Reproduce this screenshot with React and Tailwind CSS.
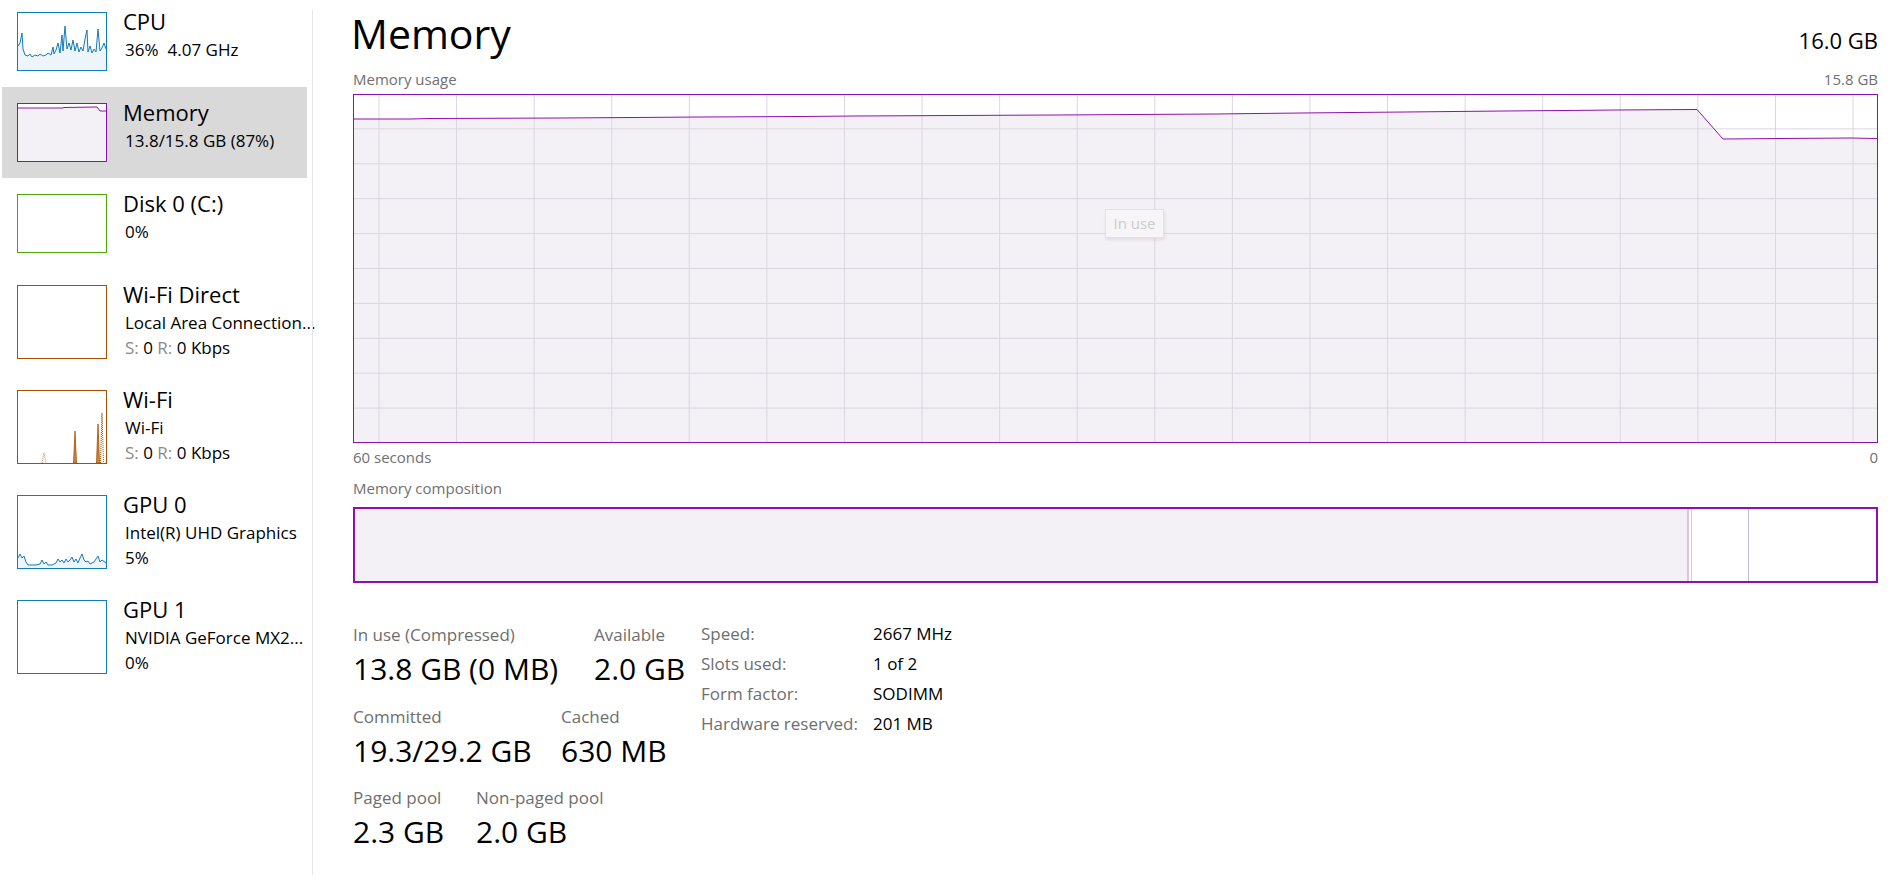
import React from "react";

const cpuPts =
  "0,33 2,30 4,20 5,36 7,42 10,43 12,41 14,44 17,42 20,43 22,41 25,43 28,42 30,40 33,42 35,34 36,41 38,37 40,30 42,40 44,22 45,38 47,13 49,36 51,30 53,37 55,27 57,38 59,30 61,39 63,34 65,38 67,26 69,17 70,39 72,33 74,40 76,36 78,39 80,16 82,38 84,35 86,30 88,36";
const gpuPts =
  "0,62 2,58 4,62 6,60 8,66 10,69 14,69 18,69 22,68 24,64 26,68 28,66 30,69 34,69 38,67 40,63 42,66 44,64 46,67 48,63 50,66 52,64 54,61 56,66 58,63 60,67 62,62 64,58 66,64 68,66 70,65 72,68 76,66 80,60 82,66 84,64 88,67";
const memThumbPts = "0,4 45,4 46,3.5 79,3 82,7 88,7";

function Thumb({ color, h, children }) {
  return (
    <div
      className={`w-[90px] shrink-0 border bg-white ${h === 74 ? "h-[74px]" : "h-[59px]"}`}
      style={{ borderColor: color }}
    >
      <svg className="block w-full h-full" viewBox={`0 0 88 ${h - 2}`} preserveAspectRatio="none">
        {children}
      </svg>
    </div>
  );
}

function AreaLine({ pts, h, stroke, fill }) {
  return (
    <>
      <polygon points={`${pts} 88,${h} 0,${h}`} fill={fill} />
      <polyline points={pts} fill="none" stroke={stroke} strokeWidth="1" />
    </>
  );
}

function SR() {
  return (
    <span>
      <span className="text-[#8a8a8a]">S:</span> 0 <span className="text-[#8a8a8a]">R:</span> 0 Kbps
    </span>
  );
}

const items = [
  {
    name: "CPU",
    lines: [
      <span key="a">
        36%<span className="ml-[9px]">4.07 GHz</span>
      </span>,
    ],
    h: 59,
    color: "#117dbb",
    graph: <AreaLine pts={cpuPts} h={57} stroke="#117dbb" fill="#eef5fa" />,
  },
  {
    name: "Memory",
    lines: ["13.8/15.8 GB (87%)"],
    h: 59,
    color: "#8b12ae",
    sel: true,
    graph: <AreaLine pts={memThumbPts} h={57} stroke="#8b12ae" fill="#f4f1f6" />,
  },
  { name: "Disk 0 (C:)", lines: ["0%"], h: 59, color: "#4da60c", graph: null },
  {
    name: "Wi-Fi Direct",
    lines: ["Local Area Connection...", <SR key="s" />],
    h: 74,
    color: "#a74f01",
    graph: null,
  },
  {
    name: "Wi-Fi",
    lines: ["Wi-Fi", <SR key="s" />],
    h: 74,
    color: "#a74f01",
    graph: (
      <>
        <polyline points="24,72 26,62 28,72" fill="none" stroke="#c98c5a" strokeWidth="1" strokeDasharray="1 1" />
        <polygon points="55.5,72 57,40 58.5,72" fill="#c4874f" stroke="#a74f01" strokeWidth="0.8" />
        <polygon points="78.5,72 80,33 81.5,72" fill="#c4874f" stroke="#a74f01" strokeWidth="0.8" />
        <polyline points="82.5,72 84,22 85.5,72" fill="none" stroke="#a74f01" strokeWidth="1" strokeDasharray="1 1" />
      </>
    ),
  },
  {
    name: "GPU 0",
    lines: ["Intel(R) UHD Graphics", "5%"],
    h: 74,
    color: "#117dbb",
    graph: <AreaLine pts={gpuPts} h={72} stroke="#117dbb" fill="#eef5fa" />,
  },
  { name: "GPU 1", lines: ["NVIDIA GeForce MX2...", "0%"], h: 74, color: "#117dbb", graph: null },
];

function Sidebar() {
  return (
    <div className="w-[312px] shrink-0 pl-[2px] pr-[5px] mt-[-4px] flex flex-col">
      {items.map((it) => (
        <div
          key={it.name}
          className={`flex pl-[15px] pt-[16px] ${it.h === 74 ? "h-[105px]" : "h-[91px]"} ${
            it.sel ? "bg-[#d9d9d9]" : ""
          }`}
        >
          <Thumb color={it.color} h={it.h}>
            {it.graph}
          </Thumb>
          <div className="ml-[16px] mt-[-5px] min-w-0">
            <div className="text-[22px] leading-[29px] whitespace-nowrap">{it.name}</div>
            <div className="mt-[1px]">
              {it.lines.map((l, i) => (
                <div key={i} className="text-[17px] leading-[25px] whitespace-nowrap pl-[2px]">
                  {l}
                </div>
              ))}
            </div>
          </div>
        </div>
      ))}
    </div>
  );
}

// chart inner 1523 x 347
const vLines = Array.from({ length: 20 }, (_, i) => 25 + i * 77.58);
const hLines = Array.from({ length: 9 }, (_, k) => -1 + (k + 1) * 34.9);
const memPts = [
  [0, 24],
  [56, 24],
  [76, 23.5],
  [206, 23],
  [280, 22.5],
  [346, 22],
  [446, 21.5],
  [500, 21],
  [600, 20.5],
  [700, 20],
  [780, 19.5],
  [860, 19],
  [946, 18],
  [1050, 17],
  [1150, 16],
  [1210, 15.5],
  [1260, 15],
  [1343, 14.5],
  [1369, 44],
  [1426, 43.5],
  [1496, 43],
  [1523, 43.5],
]
  .map((p) => p.join(","))
  .join(" ");

function UsageChart() {
  return (
    <div className="relative mt-[5px] h-[349px] border border-[#8b12ae] bg-white">
      <svg className="block w-full h-full" viewBox="0 0 1523 347" preserveAspectRatio="none">
        <polygon points={`${memPts} 1523,347 0,347`} fill="#f4f1f6" />
        {vLines.map((x, i) => (
          <line key={"v" + i} x1={x} y1="0" x2={x} y2="347" stroke="#dcd5e0" strokeWidth="1" />
        ))}
        {hLines.map((y, i) => (
          <line key={"h" + i} x1="0" y1={y} x2="1523" y2={y} stroke="#dcd5e0" strokeWidth="1" />
        ))}
        <polyline points={memPts} fill="none" stroke="#8b12ae" strokeWidth="1" />
      </svg>
      <div className="absolute left-[751px] top-[114px] w-[59px] h-[29px] border border-[#e2e2e2] bg-[#f7f5f8] shadow-[1px_2px_3px_rgba(0,0,0,0.08)] flex items-center justify-center text-[15px] text-[#cbcbcb]">
        In use
      </div>
    </div>
  );
}

function Stat({ label, value, w }) {
  return (
    <div className={w}>
      <div className="text-[17px] leading-[22px] text-[#6e6e6e] whitespace-nowrap">{label}</div>
      <div className="text-[30px] leading-[38px] mt-[4px] whitespace-nowrap">{value}</div>
    </div>
  );
}

function Main() {
  return (
    <div className="flex-1 min-w-0 pl-[40px] pr-[22px] pt-[12px] flex flex-col">
      <div className="flex justify-between items-baseline h-[42px]">
        <div className="text-[41px] leading-[42px] ml-[-2px]">Memory</div>
        <div className="text-[22px] leading-[42px]">16.0 GB</div>
      </div>
      <div className="mt-[15px] flex justify-between text-[15px] leading-[20px] text-[#707070]">
        <span>Memory usage</span>
        <span>15.8 GB</span>
      </div>
      <UsageChart />
      <div className="mt-[4px] flex justify-between text-[15px] leading-[20px] text-[#707070]">
        <span>60 seconds</span>
        <span>0</span>
      </div>
      <div className="mt-[11px] text-[15px] leading-[20px] text-[#707070]">Memory composition</div>
      <div className="mt-[9px] h-[76px] border-2 border-[#8b12ae] flex">
        <div className="w-[1334px] bg-[#f3f1f5] border-r-2 border-[#dcc3e6]" />
        <div className="w-[2px]" />
        <div className="w-[1px] bg-[#dcc3e6]" />
        <div className="w-[57px] border-r border-[#c7b4d2]" />
        <div className="flex-1" />
      </div>
      <div className="mt-[41px] flex">
        <div className="w-[348px] flex flex-col gap-[17.5px]">
          <div className="flex">
            <Stat w="w-[241px]" label="In use (Compressed)" value="13.8 GB (0 MB)" />
            <Stat label="Available" value="2.0 GB" />
          </div>
          <div className="flex">
            <Stat w="w-[208px]" label="Committed" value="19.3/29.2 GB" />
            <Stat label="Cached" value="630 MB" />
          </div>
          <div className="flex">
            <Stat w="w-[123px]" label="Paged pool" value="2.3 GB" />
            <Stat label="Non-paged pool" value="2.0 GB" />
          </div>
        </div>
        <div className="mt-[-5px] grid grid-cols-[172px_auto] content-start text-[17px] leading-[30px]">
          <span className="text-[#6e6e6e]">Speed:</span>
          <span>2667 MHz</span>
          <span className="text-[#6e6e6e]">Slots used:</span>
          <span>1 of 2</span>
          <span className="text-[#6e6e6e]">Form factor:</span>
          <span>SODIMM</span>
          <span className="text-[#6e6e6e]">Hardware reserved:</span>
          <span>201 MB</span>
        </div>
      </div>
    </div>
  );
}

export default function App() {
  return (
    <div className="flex w-[1900px] h-[887px] bg-white overflow-hidden text-black font-['Segoe_UI','Open_Sans',sans-serif]">
      <Sidebar />
      <div className="w-px shrink-0 mt-[10px] h-[865px] bg-[#e5e5e5]" />
      <Main />
    </div>
  );
}
